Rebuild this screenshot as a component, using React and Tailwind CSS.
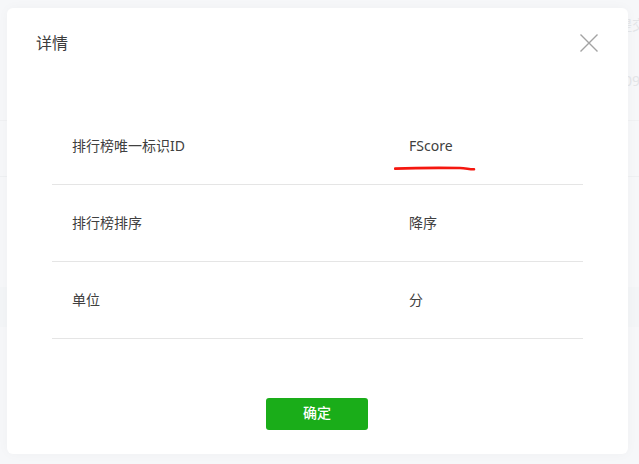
import React from 'react';

const ROWS = [
    { label: '排行榜唯一标识ID', value: 'FScore' },
    { label: '排行榜排序', value: '降序' },
    { label: '单位', value: '分' },
];

const FONT = "font-['Noto_Sans','Noto_Sans_CJK_SC',sans-serif]";

function BackdropPage() {
    // faint page behind the dialog, only the right edge and some lines show
    return (
        <div className="h-full flex flex-col text-[14px] text-[#e3e5e8]">
            <div className="h-[121px] border-b border-[#f0f1f3] flex flex-col items-end">
                <div className="mt-[15px] leading-[20px] -mr-[7px] whitespace-nowrap">提交</div>
                <div className="mt-[36px] leading-[20px] -mr-[1px]">09</div>
            </div>
            <div className="h-[56px] border-b border-[#eef0f2]" />
            <div className="h-[110px]" />
            <div className="h-[40px] bg-[#f3f5f7]" />
        </div>
    );
}

export default function App() {
    return (
        <div className={`relative w-[639px] h-[464px] overflow-hidden bg-[#f6f7f9] ${FONT}`}>
            <BackdropPage />

            <div className="absolute left-[7px] top-[8px] w-[621px] h-[446px] bg-white rounded-[6px] shadow-[0_0_12px_rgba(0,0,0,0.03)] flex flex-col">
                <div className="flex justify-between items-start pl-[29px] pr-[29px] pt-[24px] h-[100px]">
                    <h3 className="text-[16px] leading-[22px] font-normal text-[#3c3c3c]">详情</h3>
                    <svg width="20" height="20" viewBox="0 0 20 20" className="mt-[1px]" fill="none" stroke="#a3a3a3" strokeWidth="1.4">
                        <path d="M1.5 1.5 L18.5 18.5 M18.5 1.5 L1.5 18.5" />
                    </svg>
                </div>

                <div className="mx-[45px]">
                    {ROWS.map(row => (
                        <div key={row.label} className="h-[77px] border-b border-[#e5e5e5] flex items-center pl-[20px] text-[14px] text-[#404040] pb-[2px]">
                            <div className="w-[337px]">{row.label}</div>
                            <div>{row.value}</div>
                        </div>
                    ))}
                </div>

                <button className="mt-[59px] ml-[259px] w-[102px] h-[32px] bg-[#1aad19] rounded-[3px] text-white text-[14px] leading-[30px] pb-[2px] font-medium">
                    确定
                </button>

                <svg className="absolute left-[387px] top-[158px]" width="84" height="6" viewBox="0 0 84 6" fill="none">
                    <path d="M1 2.6 C20 1.9 50 1.8 66 2 C72 2.2 76 3.4 80 3.2" stroke="#f5170f" strokeWidth="2.6" strokeLinecap="round" />
                </svg>
            </div>
        </div>
    );
}
